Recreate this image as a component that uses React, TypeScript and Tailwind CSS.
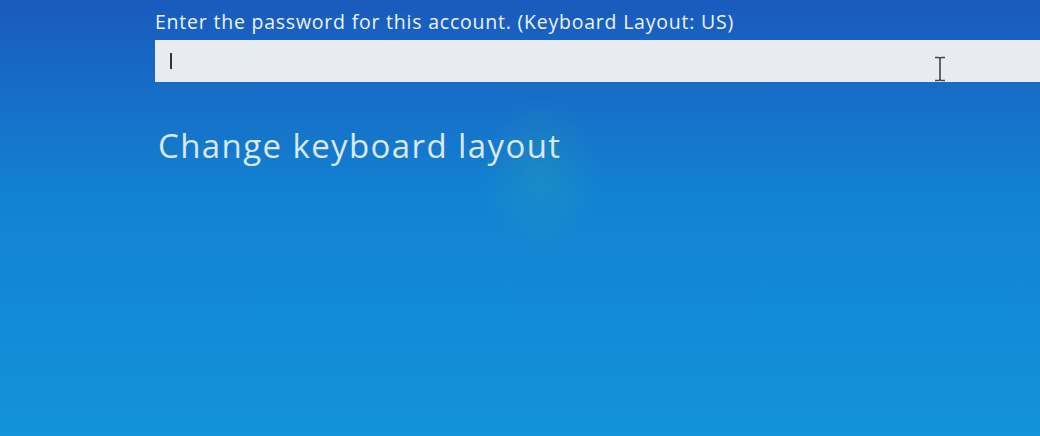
import React from "react";

export default function App() {
  return (
    <div
      className="relative w-[1040px] h-[436px] overflow-hidden bg-gradient-to-b from-[#1a5abd] via-[#1282d2] via-45% to-[#1393d9] text-white"
      style={{ fontFamily: '"Open Sans", "Noto Sans", sans-serif' }}
    >
      <div className="absolute left-[480px] top-[90px] w-[120px] h-[170px] rounded-full bg-[radial-gradient(ellipse_at_center,rgba(60,190,150,0.18),rgba(60,190,150,0)_70%)]" />
      <div className="relative pl-[155px] pt-[9px] flex flex-col">
        <div className="text-[19.5px] leading-[26px] text-[#eef3fa] tracking-[0.78px]">
          Enter the password for this account. (Keyboard Layout: US)
        </div>
        <div className="mt-[5px] h-[42px] w-[900px] bg-[#e8ebef] flex items-center relative">
          <div className="ml-[15px] w-[2px] h-[16px] bg-[#333]" />
          <svg
            className="absolute left-[778px] top-[16px]"
            width="14"
            height="26"
            viewBox="0 0 14 26"
            fill="none"
            stroke="#444"
            strokeWidth="1.6"
          >
            <path d="M2 1.5h3.5a1.5 1.5 0 0 1 1.5 1.5M12 1.5H8.5A1.5 1.5 0 0 0 7 3M7 3v20M2 24.5h3.5A1.5 1.5 0 0 0 7 23M12 24.5H8.5A1.5 1.5 0 0 1 7 23" />
          </svg>
        </div>
        <div className="mt-[44px] pl-[3px] text-[33px] leading-[40px] text-[#dbe8f5] tracking-[1.4px]">
          Change keyboard layout
        </div>
      </div>
    </div>
  );
}
